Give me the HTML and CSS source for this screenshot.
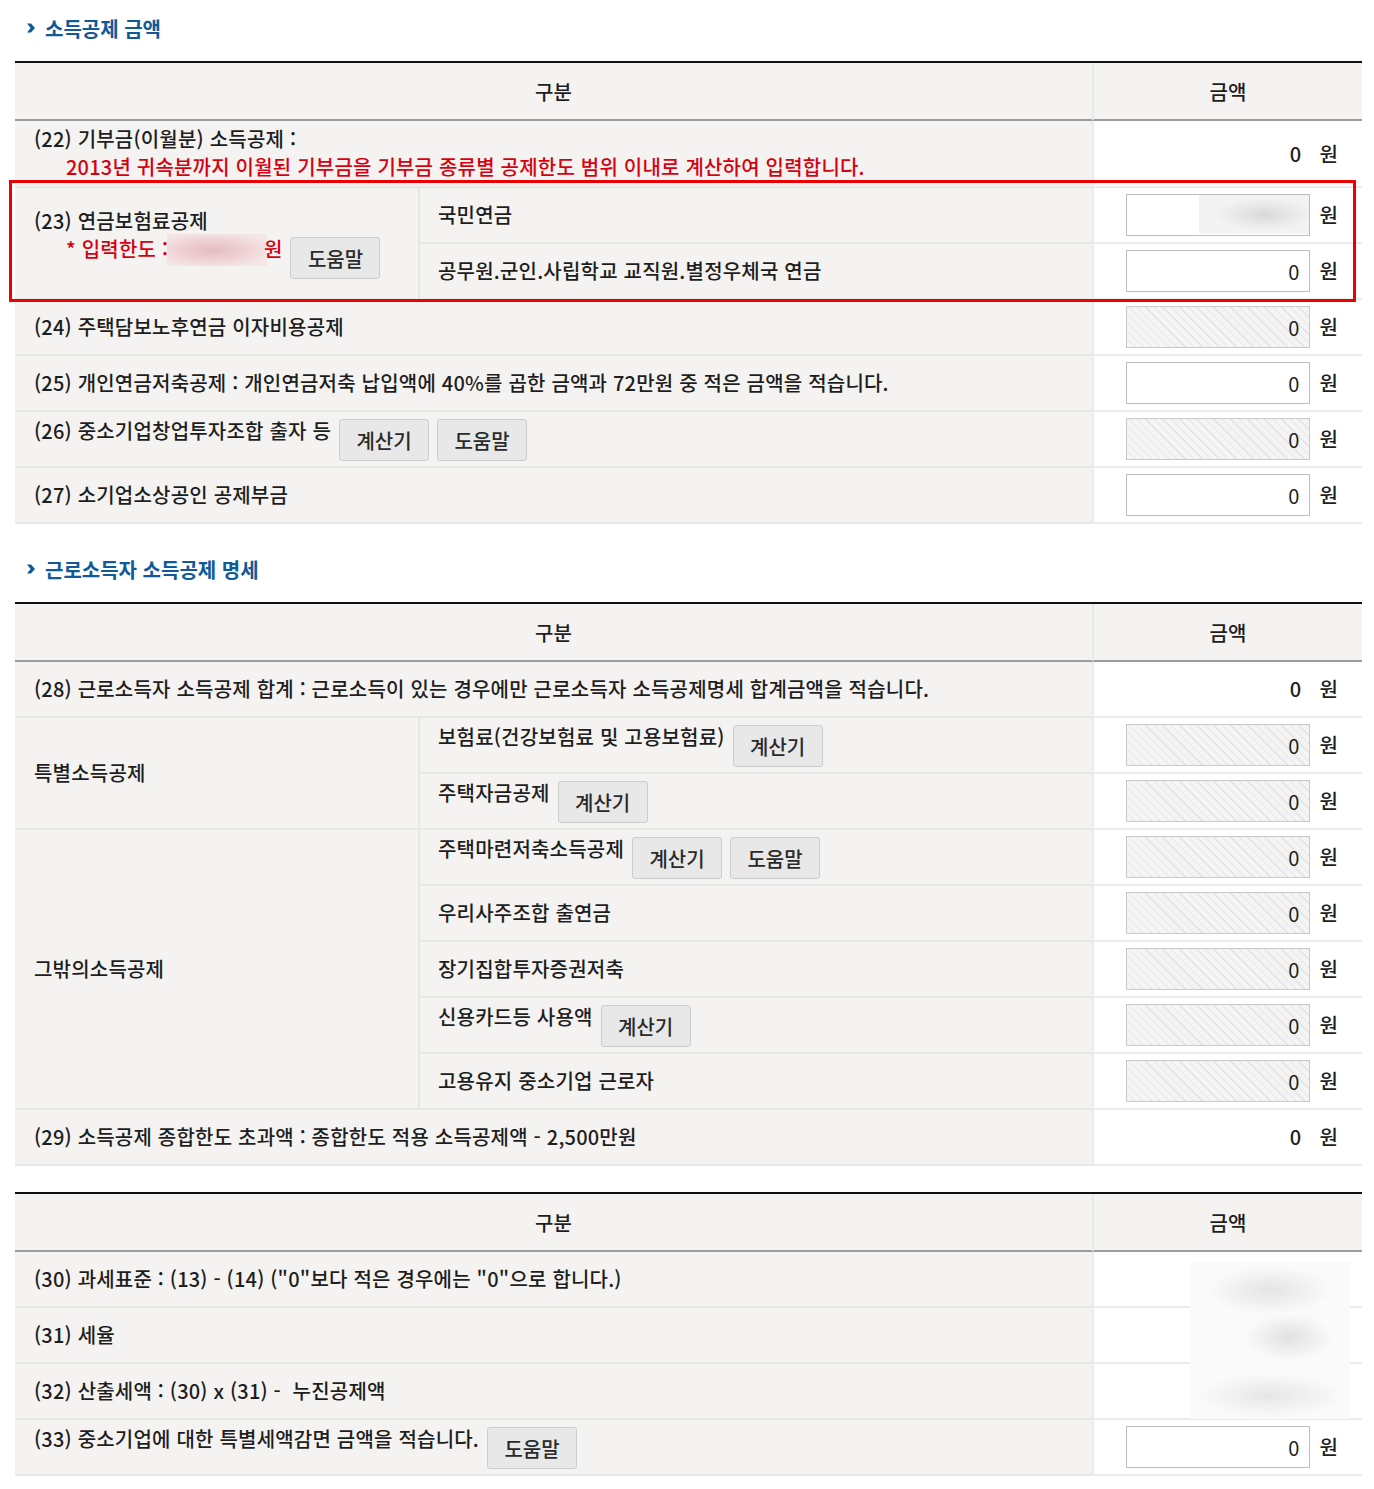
FILE: index.html
```html
<!DOCTYPE html>
<html lang="ko">
<head>
    <meta charset="UTF-8">
    <meta name="viewport" content="width=device-width, initial-scale=1.0">
    <title>소득공제 금액</title>
    <link rel="stylesheet" href="styles.css">
</head>
<body>
    <div class="page">
        <h2 class="sec-title">
            <svg class="chev" width="8" height="10" viewBox="0 0 8 10"><polygon points="0,0.5 4,0.5 8,5 4,9.5 0,9.5 3.6,5"/></svg>
            소득공제 금액
        </h2>
        <div class="tbl-wrap">
            <table class="tbl">
                <colgroup><col class="c-a"><col class="c-b"><col class="c-amt"></colgroup>
                <thead>
                    <tr><th colspan="2">구분</th><th class="amt">금액</th></tr>
                </thead>
                <tbody>
                    <tr>
                        <td colspan="2" class="tall">
                            <p>(22) 기부금(이월분) 소득공제 :</p>
                            <p class="note indent">2013년 귀속분까지 이월된 기부금을 기부금 종류별 공제한도 범위 이내로 계산하여 입력합니다.</p>
                        </td>
                        <td class="amt"><div class="amt-in"><span class="val">0</span><span class="won">원</span></div></td>
                    </tr>
                    <tr>
                        <td rowspan="2">
                            <p>(23) 연금보험료공제</p>
                            <div class="line indent">
                                <span class="note">* 입력한도 : <span class="mask-pink"></span>원</span>
                                <button class="btn" type="button">도움말</button>
                            </div>
                        </td>
                        <td class="sub">국민연금</td>
                        <td class="amt"><div class="amt-in"><input class="num masked" type="text" value=""><span class="won">원</span></div></td>
                    </tr>
                    <tr>
                        <td class="sub">공무원.군인.사립학교 교직원.별정우체국 연금</td>
                        <td class="amt"><div class="amt-in"><input class="num" type="text" value="0"><span class="won">원</span></div></td>
                    </tr>
                    <tr>
                        <td colspan="2">(24) 주택담보노후연금 이자비용공제</td>
                        <td class="amt"><div class="amt-in"><input class="num off" type="text" value="0" readonly><span class="won">원</span></div></td>
                    </tr>
                    <tr>
                        <td colspan="2">(25) 개인연금저축공제 : 개인연금저축 납입액에 40%를 곱한 금액과 72만원 중 적은 금액을 적습니다.</td>
                        <td class="amt"><div class="amt-in"><input class="num" type="text" value="0"><span class="won">원</span></div></td>
                    </tr>
                    <tr>
                        <td colspan="2">
                            <div class="line">
                                <span>(26) 중소기업창업투자조합 출자 등</span>
                                <button class="btn" type="button">계산기</button>
                                <button class="btn" type="button">도움말</button>
                            </div>
                        </td>
                        <td class="amt"><div class="amt-in"><input class="num off" type="text" value="0" readonly><span class="won">원</span></div></td>
                    </tr>
                    <tr>
                        <td colspan="2">(27) 소기업소상공인 공제부금</td>
                        <td class="amt"><div class="amt-in"><input class="num" type="text" value="0"><span class="won">원</span></div></td>
                    </tr>
                </tbody>
            </table>
            <div class="hl"></div>
        </div>

        <h2 class="sec-title next">
            <svg class="chev" width="8" height="10" viewBox="0 0 8 10"><polygon points="0,0.5 4,0.5 8,5 4,9.5 0,9.5 3.6,5"/></svg>
            근로소득자 소득공제 명세
        </h2>
        <div class="tbl-wrap">
            <table class="tbl">
                <colgroup><col class="c-a"><col class="c-b"><col class="c-amt"></colgroup>
                <thead>
                    <tr><th colspan="2">구분</th><th class="amt">금액</th></tr>
                </thead>
                <tbody>
                    <tr>
                        <td colspan="2">(28) 근로소득자 소득공제 합계 : 근로소득이 있는 경우에만 근로소득자 소득공제명세 합계금액을 적습니다.</td>
                        <td class="amt"><div class="amt-in"><span class="val">0</span><span class="won">원</span></div></td>
                    </tr>
                    <tr>
                        <td rowspan="2">특별소득공제</td>
                        <td class="sub">
                            <div class="line">
                                <span>보험료(건강보험료 및 고용보험료)</span>
                                <button class="btn" type="button">계산기</button>
                            </div>
                        </td>
                        <td class="amt"><div class="amt-in"><input class="num off" type="text" value="0" readonly><span class="won">원</span></div></td>
                    </tr>
                    <tr>
                        <td class="sub">
                            <div class="line">
                                <span>주택자금공제</span>
                                <button class="btn" type="button">계산기</button>
                            </div>
                        </td>
                        <td class="amt"><div class="amt-in"><input class="num off" type="text" value="0" readonly><span class="won">원</span></div></td>
                    </tr>
                    <tr>
                        <td rowspan="5">그밖의소득공제</td>
                        <td class="sub">
                            <div class="line">
                                <span>주택마련저축소득공제</span>
                                <button class="btn" type="button">계산기</button>
                                <button class="btn" type="button">도움말</button>
                            </div>
                        </td>
                        <td class="amt"><div class="amt-in"><input class="num off" type="text" value="0" readonly><span class="won">원</span></div></td>
                    </tr>
                    <tr>
                        <td class="sub">우리사주조합 출연금</td>
                        <td class="amt"><div class="amt-in"><input class="num off" type="text" value="0" readonly><span class="won">원</span></div></td>
                    </tr>
                    <tr>
                        <td class="sub">장기집합투자증권저축</td>
                        <td class="amt"><div class="amt-in"><input class="num off" type="text" value="0" readonly><span class="won">원</span></div></td>
                    </tr>
                    <tr>
                        <td class="sub">
                            <div class="line">
                                <span>신용카드등 사용액</span>
                                <button class="btn" type="button">계산기</button>
                            </div>
                        </td>
                        <td class="amt"><div class="amt-in"><input class="num off" type="text" value="0" readonly><span class="won">원</span></div></td>
                    </tr>
                    <tr>
                        <td class="sub">고용유지 중소기업 근로자</td>
                        <td class="amt"><div class="amt-in"><input class="num off" type="text" value="0" readonly><span class="won">원</span></div></td>
                    </tr>
                    <tr>
                        <td colspan="2">(29) 소득공제 종합한도 초과액 : 종합한도 적용 소득공제액 - 2,500만원</td>
                        <td class="amt"><div class="amt-in"><span class="val">0</span><span class="won">원</span></div></td>
                    </tr>
                </tbody>
            </table>
        </div>

        <div class="tbl-wrap">
            <table class="tbl">
                <colgroup><col class="c-a"><col class="c-b"><col class="c-amt"></colgroup>
                <thead>
                    <tr><th colspan="2">구분</th><th class="amt">금액</th></tr>
                </thead>
                <tbody>
                    <tr>
                        <td colspan="2">(30) 과세표준 : (13) - (14) ("0"보다 적은 경우에는 "0"으로 합니다.)</td>
                        <td class="amt"></td>
                    </tr>
                    <tr>
                        <td colspan="2">(31) 세율</td>
                        <td class="amt"></td>
                    </tr>
                    <tr>
                        <td colspan="2">(32) 산출세액 : (30) x (31) - &nbsp;누진공제액</td>
                        <td class="amt"></td>
                    </tr>
                    <tr>
                        <td colspan="2">
                            <div class="line">
                                <span>(33) 중소기업에 대한 특별세액감면 금액을 적습니다.</span>
                                <button class="btn" type="button">도움말</button>
                            </div>
                        </td>
                        <td class="amt"><div class="amt-in"><input class="num" type="text" value="0"><span class="won">원</span></div></td>
                    </tr>
                </tbody>
            </table>
            <div class="mask-box"></div>
        </div>
    </div>
</body>
</html>
```

FILE: styles.css
```css
body {
    margin: 0;
    font-family: "Noto Sans CJK KR", "Noto Sans", sans-serif;
    font-size: 20px;
    font-weight: 500;
    letter-spacing: 0.2px;
    color: #1e1e1e;
    background: #fff;
}
.page {
    width: 1347px;
    padding: 14px 12px 12px 15px;
}
.sec-title {
    display: flex;
    align-items: center;
    gap: 10px;
    height: 28px;
    margin: 0 0 19px;
    padding-left: 12px;
    font-size: 20px;
    font-weight: 700;
    letter-spacing: 0;
    color: #105a98;
}
.sec-title.next {
    margin-top: 31px;
}
.chev {
    fill: #105a98;
}
.tbl-wrap {
    position: relative;
}
.tbl-wrap + .tbl-wrap {
    margin-top: 26px;
}
.tbl {
    width: 100%;
    table-layout: fixed;
    border-collapse: separate;
    border-spacing: 0;
    border-top: 2px solid #111;
}
.c-a {
    width: 403px;
}
.c-amt {
    width: 270px;
}
.tbl th {
    box-sizing: border-box;
    height: 58px;
    background: #f4f3f1;
    border-bottom: 2px solid #9c9c9c;
    font-weight: 500;
    text-align: center;
}
.tbl th.amt {
    border-left: 2px solid #e8e8e6;
}
.tbl td {
    box-sizing: border-box;
    height: 56px;
    padding: 0 18px 0 19px;
    background: #f4f3f1;
    border-bottom: 2px solid #e8e8e6;
    vertical-align: middle;
    line-height: 28px;
}
.tbl td.tall {
    padding-top: 4px;
    padding-bottom: 5px;
}
.tbl td.sub {
    padding-left: 18px;
    border-left: 2px solid #e6e6e4;
}
.tbl td.amt {
    padding: 0 24px 0 0;
    background: #fff;
    border-left: 2px solid #ebebea;
    border-bottom-color: #ebebeb;
}
.tbl p {
    margin: 0;
}
.indent {
    padding-left: 32px;
}
.note {
    color: #d7000f;
}
.line {
    display: flex;
    align-items: flex-start;
    gap: 8px;
}
.btn {
    width: 90px;
    height: 42px;
    margin-top: 2px;
    padding: 0;
    flex-shrink: 0;
    background: #e8e8e8;
    border: 1px solid #cdcdcd;
    border-radius: 3px;
    font-family: inherit;
    font-size: 20px;
    font-weight: 500;
    color: #2a2a2a;
}
.mask-pink {
    display: inline-block;
    width: 100px;
    height: 32px;
    margin: -4px -3px 0 -7px;
    vertical-align: middle;
    background: radial-gradient(ellipse 60px 18px at 45% 50%, #e6bcc0, #efd3d5 60%, #f5e6e7);
}
.amt-in {
    display: flex;
    justify-content: flex-end;
    align-items: center;
    gap: 9px;
}
.val {
    margin-right: 9px;
}
.num {
    box-sizing: border-box;
    width: 184px;
    height: 42px;
    padding: 0 10px;
    border: 1px solid #bdbdbd;
    background: #fff;
    font-family: inherit;
    font-size: 20px;
    color: #1e1e1e;
    text-align: right;
}
.num.off {
    border-color: #c9c9c9;
    background: repeating-linear-gradient(45deg, #f4f4f4 0 5px, #e3e3e3 5px 6px);
}
.num.masked {
    background: radial-gradient(ellipse 50px 17px at 60% 50%, #d9d9d9, #e8e8e8 55%, #f3f3f3) right top / 110px 39px no-repeat, #fff;
}
.hl {
    position: absolute;
    left: -6px;
    top: 119px;
    width: 1347px;
    height: 122px;
    box-sizing: border-box;
    border: 3px solid #ec0000;
    pointer-events: none;
}
.mask-box {
    position: absolute;
    left: 1175px;
    top: 70px;
    width: 160px;
    height: 157px;
    background:
        radial-gradient(ellipse 62px 24px at 50% 18%, #e4e4e4, rgba(250, 250, 250, 0)),
        radial-gradient(ellipse 44px 24px at 62% 48%, #e1e1e1, rgba(250, 250, 250, 0)),
        radial-gradient(ellipse 72px 22px at 50% 85%, #e6e6e6, rgba(250, 250, 250, 0)),
        #fafafa;
}
```
